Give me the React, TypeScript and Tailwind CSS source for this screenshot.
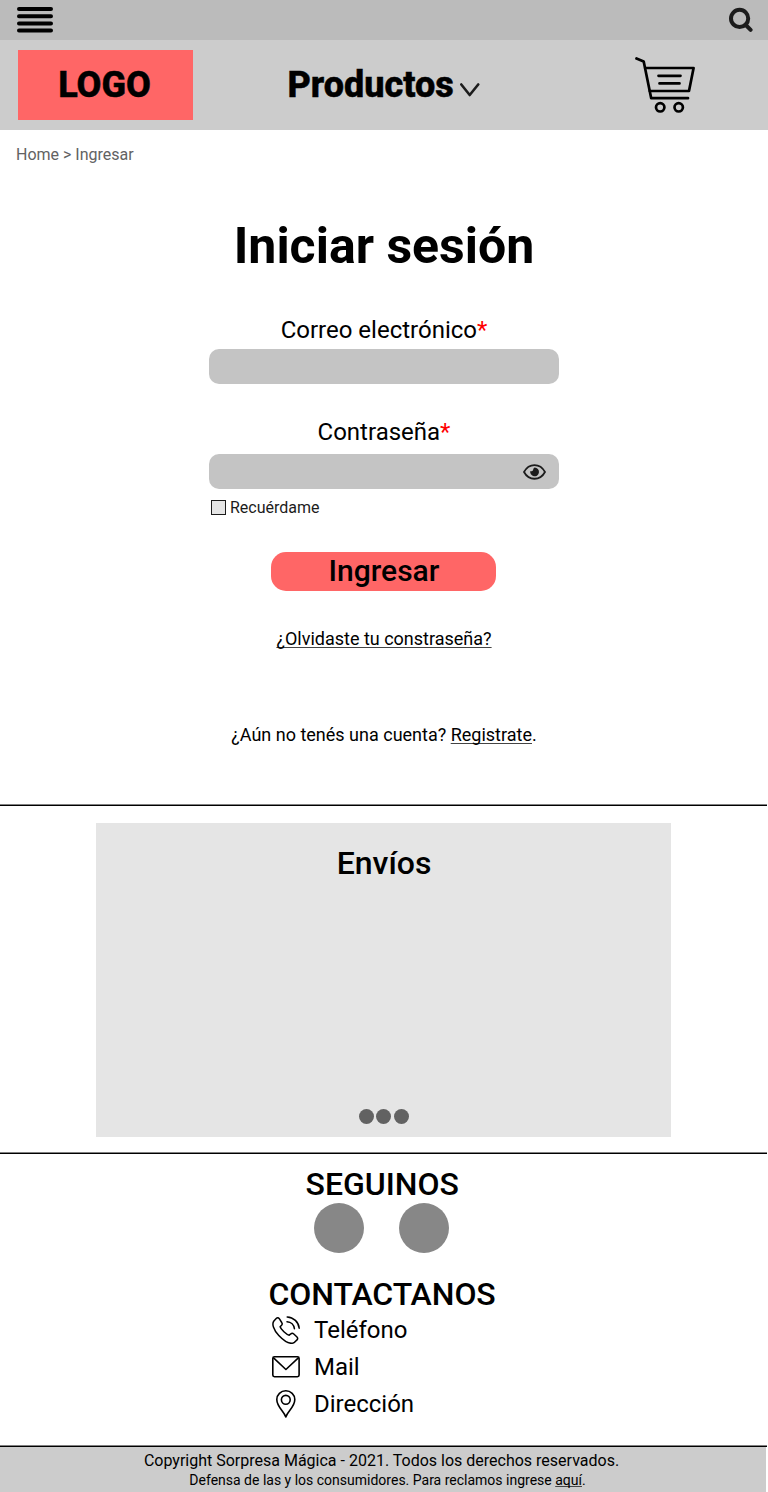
import React from "react";

function MenuIcon() {
  return (
    <svg width="36" height="26" viewBox="0 0 36 26" stroke="#000" strokeWidth="4" strokeLinecap="round">
      <path d="M2 2H34M2 9.2H34M2 16.4H34M2 23.6H34" />
    </svg>
  );
}

function SearchIcon() {
  return (
    <svg width="24" height="25" viewBox="0 0 24 25" fill="none" stroke="#1c1c1c" strokeWidth="4" strokeLinecap="round">
      <circle cx="10.6" cy="11.4" r="8.6" />
      <path d="M16.8 18L21.6 22.8" strokeWidth="4" />
    </svg>
  );
}

function CartIcon() {
  return (
    <svg width="60" height="56" viewBox="0 0 60 56" fill="none" stroke="#000" strokeWidth="2.7" strokeLinecap="round" strokeLinejoin="round">
      <path d="M1.5 1.5L8.7 4.4L16.2 41.2H53" />
      <path d="M10.2 11H58.6L54 34H14.8" />
      <path d="M23.5 18.8H45.5M24.5 26.4H44.5" />
      <circle cx="25.2" cy="50.3" r="4.2" />
      <circle cx="43.7" cy="50.3" r="4.2" />
    </svg>
  );
}

function EyeIcon() {
  return (
    <svg width="23" height="16" viewBox="0 0 23 16" fill="none">
      <path d="M1 8C6 -1.2 17 -1.2 22 8C17 17 6 17 1 8Z" stroke="#1c1c1c" strokeWidth="1.8" strokeLinejoin="round" />
      <path d="M11.7 3.5A4.4 4.4 0 1 1 7.3 6.9C8.5 7.5 9.6 7.1 10 6.2C10.4 5.2 10.3 4.3 11.7 3.5Z" fill="#1c1c1c" />
    </svg>
  );
}

function PhoneIcon() {
  return (
    <svg width="28" height="28" viewBox="0 0 28 28" fill="none" stroke="#000" strokeWidth="1.5" strokeLinecap="round" strokeLinejoin="round">
      <path d="M4.2 2.5L1.9 5C-.3 7.7 1.2 13.6 6.8 19.5C12.5 25.5 18.5 28.4 22 26.7L25 23.9C25.9 22.9 25.8 21.9 25 21L21.8 18C20.8 17.1 19.7 17.1 18.8 17.9L17.2 19.2C14.5 18.6 8.8 13.3 8.1 10.8L9.6 9.2C10.4 8.3 10.4 7.4 9.7 6.5L7.3 2.7C6.4 1.6 5.2 1.5 4.2 2.5Z" />
      <path d="M15.2 .9C21.5 1.1 26.7 6.2 27.2 12.3M15 5.7C19 5.9 22 8.8 22.4 12.7" />
    </svg>
  );
}

function MailIcon() {
  return (
    <svg width="28" height="22" viewBox="0 0 28 22" fill="none" stroke="#000" strokeWidth="1.6" strokeLinejoin="round">
      <rect x=".8" y=".8" width="26.3" height="19.9" rx="1.6" />
      <path d="M1.3 1.6L13.9 13.5L26.6 1.6" />
    </svg>
  );
}

function PinIcon() {
  return (
    <svg width="20" height="28" viewBox="0 0 20 28" fill="none" stroke="#000" strokeWidth="1.6" strokeLinejoin="round">
      <path d="M9.8 27C8 21 .8 17 .8 9.5C.8 4.6 4.8 .8 9.8 .8S18.8 4.6 18.8 9.5C18.8 17 11.6 21 9.8 27Z" />
      <circle cx="9.8" cy="9.8" r="4.4" />
    </svg>
  );
}

function Rule() {
  return (
    <div className="h-[2px] w-[767px]">
      <div className="h-px bg-[#808080]" />
      <div className="h-px bg-black" />
    </div>
  );
}

function Contact({ icon, label }: { icon: React.ReactNode; label: string }) {
  return (
    <li className="flex h-[37px] items-center">
      <span className="flex w-7 shrink-0 justify-center">{icon}</span>
      <span className="ml-[14px] text-2xl leading-[24px]">{label}</span>
    </li>
  );
}

export default function App() {
  return (
    <div className="flex h-[1492px] w-[768px] flex-col overflow-hidden bg-white font-['Roboto',sans-serif] text-black">
      <div className="flex h-10 shrink-0 items-start justify-between bg-[#bbbbbb] pt-[7px] pr-[15px] pl-[17px]">
        <button><MenuIcon /></button>
        <button><SearchIcon /></button>
      </div>

      <header className="flex h-[90px] shrink-0 items-start bg-[#cccccc] pt-[10px] pl-[18px]">
        <div className="flex h-[70px] w-[175px] items-start justify-center bg-[#ff6666] pt-[17px] pr-[2px] text-[36px] leading-[36px] font-extrabold [-webkit-text-stroke:0.5px_#000]">LOGO</div>
        <div className="ml-[94.5px] flex w-[192.5px] items-start justify-between pt-[17px]">
          <span className="text-[36px] leading-[36px] font-extrabold [-webkit-text-stroke:0.5px_#000]">Productos</span>
          <svg className="mt-[16px]" width="20" height="14" viewBox="0 0 20 14" fill="none" stroke="#1c1c1c" strokeWidth="2.6" strokeLinecap="round" strokeLinejoin="round">
            <path d="M1.3 1.5L9.7 12L18.2 1.5" />
          </svg>
        </div>
        <div className="mt-[7px] ml-[155px]"><CartIcon /></div>
      </header>

      <nav className="mt-[17px] ml-4 shrink-0 text-base leading-[16px] text-[#626262]">Home &gt; Ingresar</nav>

      <main className="flex h-[641px] shrink-0 flex-col items-center">
        <h1 className="mt-[58px] text-[50px] leading-[50px] font-bold">Iniciar sesión</h1>
        <label className="mt-[47px] text-2xl leading-[24px]">Correo electrónico<span className="text-[#ff0000]">*</span></label>
        <div className="mt-[7px] h-[35px] w-[350px] rounded-[10px] bg-[#c4c4c4]" />
        <label className="mt-[36px] text-2xl leading-[24px]">Contraseña<span className="text-[#ff0000]">*</span></label>
        <div className="mt-[10px] flex h-[35px] w-[350px] items-center justify-end rounded-[10px] bg-[#c4c4c4] pr-[13px]"><EyeIcon /></div>
        <div className="mt-[11px] flex h-[16px] w-[346px] items-start">
          <span className="h-[15px] w-[15px] border border-[#1c1c1c] bg-[#e5e5e5]" />
          <span className="ml-1 text-base leading-[16px] text-[#1c1c1c]">Recuérdame</span>
        </div>
        <button className="mt-[36px] mr-px flex h-[38.5px] w-[225px] items-start justify-center rounded-[15px] bg-[#ff6666] pt-[4px] pl-px text-[30px] leading-[30px] font-medium">Ingresar</button>
        <a className="mt-[39.5px] text-lg leading-[18px] underline decoration-[#444] decoration-1 underline-offset-[2px] [text-decoration-skip-ink:none]">¿Olvidaste tu constraseña?</a>
        <p className="mt-[78px] text-lg leading-[18px]">¿Aún no tenés una cuenta? <a className="underline decoration-[#444] decoration-1 underline-offset-[2px] [text-decoration-skip-ink:none]">Registrate</a>.</p>
      </main>

      <Rule />

      <section className="mt-[17px] ml-24 flex h-[313.5px] w-[575px] shrink-0 flex-col items-center justify-between bg-[#e5e5e5] pt-[24px] pb-[12.5px]">
        <h2 className="pl-px text-[32px] leading-[32px] font-medium">Envíos</h2>
        <div className="flex w-[50px]">
          <span className="h-[15px] w-[15px] rounded-full bg-[#626262]" />
          <span className="ml-[2px] h-[15px] w-[15px] rounded-full bg-[#626262]" />
          <span className="ml-[3px] h-[15px] w-[15px] rounded-full bg-[#626262]" />
        </div>
      </section>

      <div className="mt-[15.5px] shrink-0"><Rule /></div>

      <section className="flex h-[291px] shrink-0 flex-col pt-[14px]">
        <h2 className="ml-[305.5px] text-[32px] leading-[32px] font-medium">SEGUINOS</h2>
        <div className="mt-[3px] ml-[314px] flex gap-[35px]">
          <span className="h-[50px] w-[50px] rounded-full bg-[#878787]" />
          <span className="h-[50px] w-[50px] rounded-full bg-[#878787]" />
        </div>
        <h2 className="mt-[25px] ml-[268.5px] text-[32px] leading-[32px] font-medium tracking-[-0.08px]">CONTACTANOS</h2>
        <ul className="mt-px ml-[272px]">
          <Contact icon={<PhoneIcon />} label="Teléfono" />
          <Contact icon={<MailIcon />} label="Mail" />
          <Contact icon={<PinIcon />} label="Dirección" />
        </ul>
      </section>

      <footer className="flex h-[47px] w-[767px] shrink-0 flex-col">
        <Rule />
        <div className="flex h-[45px] w-[766px] flex-col items-center bg-[#cccccc] pt-[6px]">
          <p className="mr-[3px] text-base leading-[16px]">Copyright Sorpresa Mágica - 2021. Todos los derechos reservados.</p>
          <p className="mt-[4px] ml-[9px] text-sm leading-[14px]">Defensa de las y los consumidores. Para reclamos ingrese <a className="underline decoration-[#444] [text-decoration-skip-ink:none]">aquí</a>.</p>
        </div>
      </footer>
    </div>
  );
}
